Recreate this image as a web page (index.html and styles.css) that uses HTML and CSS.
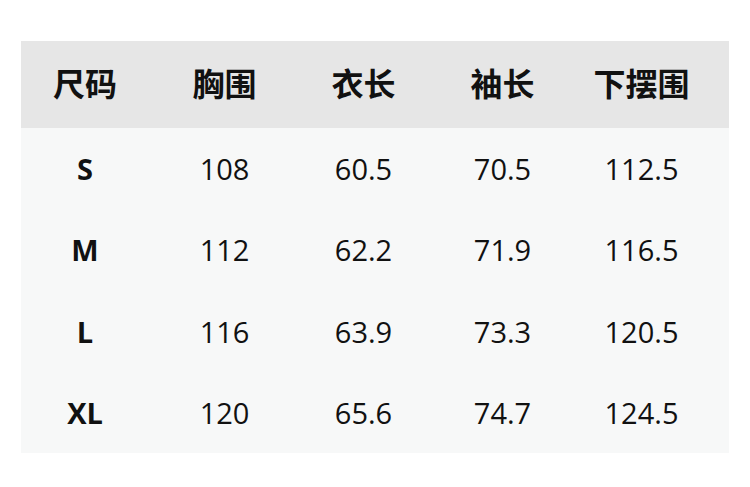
FILE: index.html
```html
<!DOCTYPE html>
<html lang="zh">
<head>
<meta charset="utf-8">
<link rel="stylesheet" href="styles.css">
</head>
<body>
<div class="table">
  <div class="row head">
    <div class="cell first">尺码</div><div class="cell">胸围</div><div class="cell">衣长</div><div class="cell">袖长</div><div class="cell">下摆围</div>
  </div>
  <div class="body">
    <div class="row"><div class="cell first size">S</div><div class="cell">108</div><div class="cell">60.5</div><div class="cell">70.5</div><div class="cell">112.5</div></div>
    <div class="row"><div class="cell first size">M</div><div class="cell">112</div><div class="cell">62.2</div><div class="cell">71.9</div><div class="cell">116.5</div></div>
    <div class="row"><div class="cell first size">L</div><div class="cell">116</div><div class="cell">63.9</div><div class="cell">73.3</div><div class="cell">120.5</div></div>
    <div class="row"><div class="cell first size">XL</div><div class="cell">120</div><div class="cell">65.6</div><div class="cell">74.7</div><div class="cell">124.5</div></div>
  </div>
</div>
</body>
</html>
```
FILE: styles.css
```css
html, body { margin: 0; padding: 0; background: #ffffff; }
body { padding: 41px 21px 0 21px; font-family: "Open Sans", "Noto Sans CJK SC", sans-serif; color: #111111; }
.table { width: 708px; }
.row { display: grid; grid-template-columns: 134px 139px 139px 139px 139px 18px; align-items: center; }
.head { height: 87px; box-sizing: border-box; padding-bottom: 5px; background: #e6e6e6; font-family: "Noto Sans CJK SC", sans-serif; font-weight: 700; font-size: 32px; }
.body { background: #f7f8f8; padding: 0; }
.body .row { height: 81.25px; font-size: 29px; }
.cell { text-align: center; line-height: 1; }
.first { padding-right: 6px; }
.size { font-weight: 700; }
```
